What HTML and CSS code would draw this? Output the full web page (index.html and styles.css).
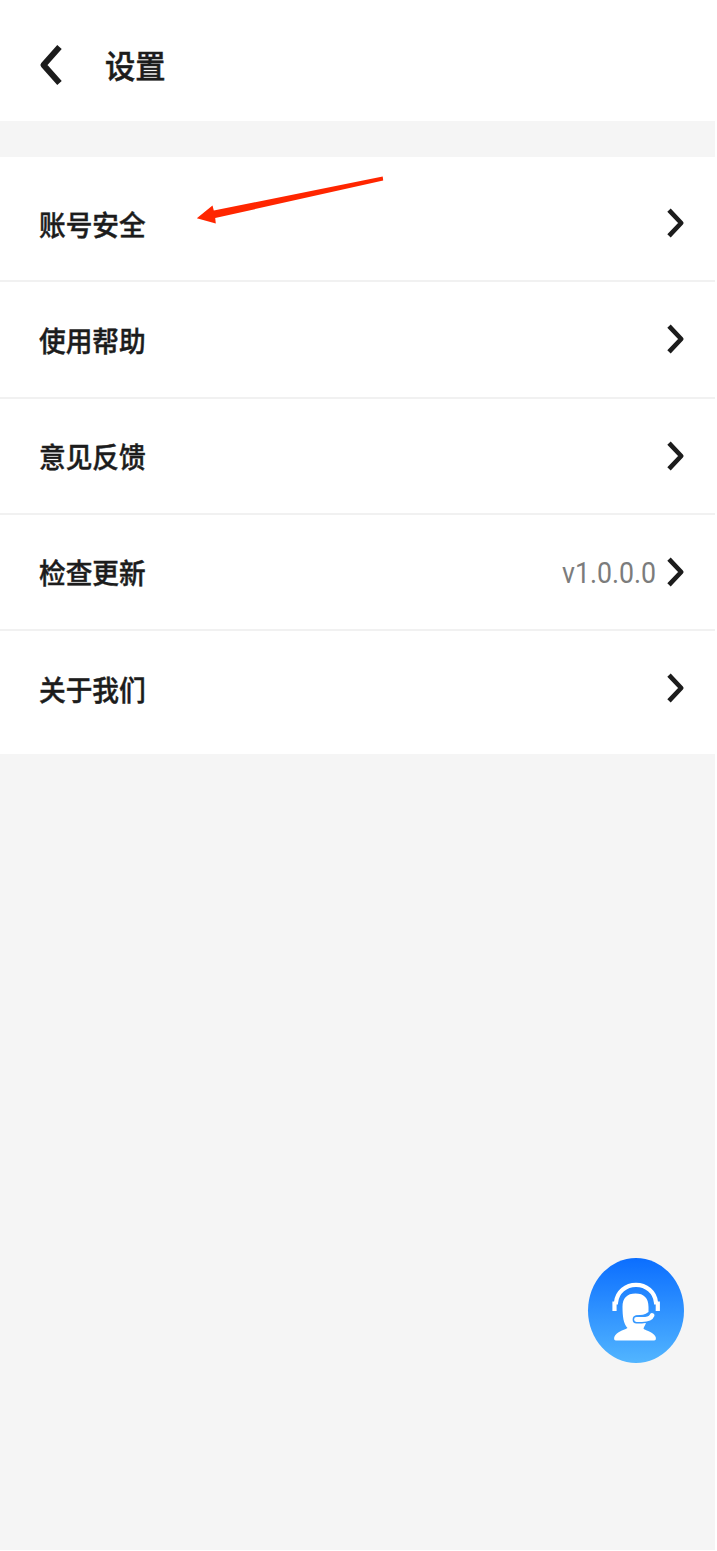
FILE: index.html
```html
<!DOCTYPE html>
<html lang="zh-CN">
<head>
<meta charset="utf-8">
<title>设置</title>
<link rel="stylesheet" href="styles.css">
</head>
<body>
<main class="screen">
  <header class="header">
    <svg class="back" viewBox="0 0 26 42"><path d="M21.500 3 5.500 21l16 18"/></svg>
    <h1 class="title">设置</h1>
  </header>
  <ul class="list">
    <li class="row"><span class="label">账号安全</span><svg class="chevron" viewBox="0 0 20 32"><path d="M3 3.200 15.200 16 3 28.800"/></svg></li>
    <li class="row"><span class="label">使用帮助</span><svg class="chevron" viewBox="0 0 20 32"><path d="M3 3.200 15.200 16 3 28.800"/></svg></li>
    <li class="row"><span class="label">意见反馈</span><svg class="chevron" viewBox="0 0 20 32"><path d="M3 3.200 15.200 16 3 28.800"/></svg></li>
    <li class="row"><span class="label">检查更新</span><span class="version">v1.0.0.0</span><svg class="chevron" viewBox="0 0 20 32"><path d="M3 3.200 15.200 16 3 28.800"/></svg></li>
    <li class="row"><span class="label">关于我们</span><svg class="chevron" viewBox="0 0 20 32"><path d="M3 3.200 15.200 16 3 28.800"/></svg></li>
  </ul>
  <svg class="arrow" viewBox="0 0 190 50"><path d="M0.800 42.200 16.500 29.500 17.800 34.500 186.700 0.500 187.200 4.500 19.200 42 19.800 47.500Z"/></svg>
  <button class="service" aria-label="客服">
    <svg class="agent" viewBox="0 0 96 105">
      <path class="line" d="M26.500 53V43.500M26.500 44.500H28C29 34 38 26.800 48 26.800S67 34 68 44.500H69.800M69.800 43.500V53"/>
      <path class="solid" d="M34.500 49C34.500 40 39 35.500 47.500 35.500S60.500 40 60.500 49V54C57 57 53 57.200 49 57.200C45 57.200 44.500 64 49 64.800H58C57.500 67 56 68.500 55.500 70.500C56 72.500 65 73 67.700 79Q68.500 82.500 66 82.500H28Q25.500 82.500 26.300 79C28.500 73.500 35 72.500 39.500 70C35.500 66 34.500 58 34.500 49Z"/>
      <path class="boom" d="M48.500 61.500H54Q62.500 61.500 64 57.500"/>
      <path class="mic" d="M48.500 61.500H54Q62.500 61.500 64 57.500"/>
    </svg>
  </button>
</main>
</body>
</html>
```
FILE: styles.css
```css
body {
  margin: 0;
  background: #fff;
  font-family: "Noto Sans CJK SC", sans-serif;
  color: #1c1c1c;
}

.screen {
  position: relative;
  width: 715px;
  height: 1550px;
  background: #f5f5f5;
}

.header {
  display: flex;
  align-items: center;
  gap: 41px;
  box-sizing: border-box;
  height: 121px;
  padding: 8px 38px 0 38px;
  background: #fff;
}

.back {
  width: 26px;
  height: 42px;
  fill: none;
  stroke: #1c1c1c;
  stroke-width: 6;
  stroke-linejoin: round;
}

.title {
  margin: 0 0 1px;
  font-size: 30.3px;
  font-weight: 500;
  line-height: 40px;
  -webkit-text-stroke: 0.5px #1c1c1c;
  transform: scaleY(1.06);
}

.list {
  margin: 36px 0 0;
  padding: 9px 0 7px;
  background: #fff;
  list-style: none;
}

.row {
  display: flex;
  align-items: center;
  box-sizing: border-box;
  height: 116.25px;
  padding: 0 29px 0 39px;
  border-bottom: 2px solid #f1f1f1;
}

.row:last-child {
  border-bottom-color: transparent;
}

.label {
  flex: 1;
  padding-top: 1px;
  font-size: 26.7px;
  font-weight: 500;
  line-height: 36px;
  -webkit-text-stroke: 0.4px #1c1c1c;
  transform: scaleY(1.06);
}

.version {
  margin-right: 10px;
  padding-top: 2px;
  font-family: Roboto, sans-serif;
  font-size: 26.7px;
  color: #7c7c7c;
  transform: scaleY(1.09);
}

.chevron {
  width: 20px;
  height: 32px;
  fill: none;
  stroke: #1c1c1c;
  stroke-width: 4.7;
  stroke-linejoin: round;
}

.arrow {
  position: absolute;
  left: 196px;
  top: 176px;
  width: 190px;
  height: 50px;
  fill: #ff2600;
}

.service {
  position: absolute;
  left: 588px;
  top: 1258px;
  width: 96px;
  height: 105px;
  padding: 0;
  border: 0;
  border-radius: 50%;
  background: linear-gradient(#0b6eff, #52b5ff);
}

.agent {
  display: block;
  width: 96px;
  height: 105px;
  fill: none;
}

.line {
  stroke: #fff;
  stroke-width: 4.2;
}

.solid {
  fill: #fff;
}

.boom {
  stroke: #3598ff;
  stroke-width: 7.8;
  stroke-linecap: round;
}

.mic {
  stroke: #fff;
  stroke-width: 4.8;
  stroke-linecap: round;
}
```
